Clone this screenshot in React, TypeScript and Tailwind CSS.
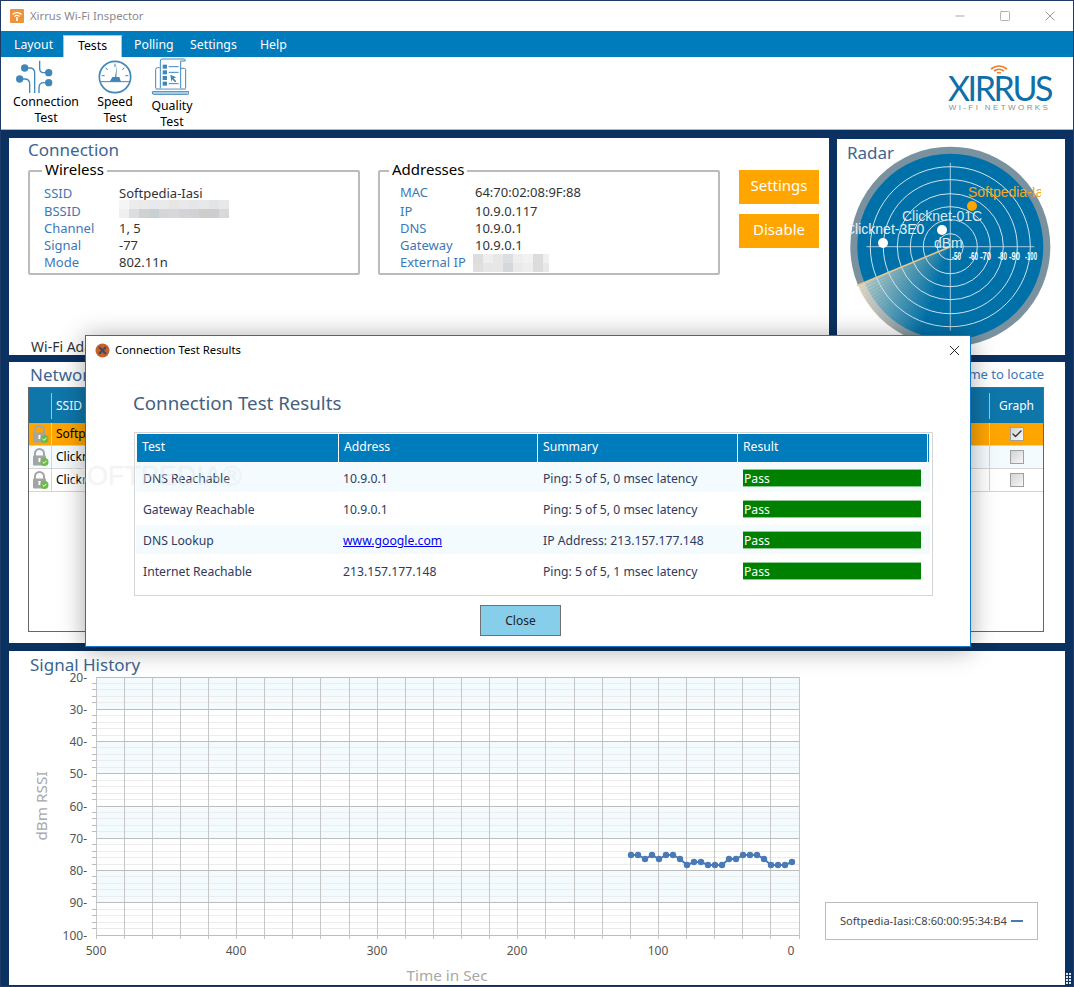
import React from "react";
import { Minus, Square, X, Check } from "lucide-react";

const LABEL = "text-[#3b78b8]";
const HEAD = "text-[17px] text-[#3d6591]";

function Blur({ rows }: { rows: string[][] }) {
  return (
    <div className="flex flex-col overflow-hidden">
      {rows.map((r, i) => (
        <div key={i} className="flex h-[9px]">
          {r.map((c, j) => (
            <div key={j} className="w-[10px] h-full shrink-0" style={{ background: c }} />
          ))}
        </div>
      ))}
    </div>
  );
}

function AppIcon() {
  return (
    <svg width="14" height="14" viewBox="0 0 14 14">
      <rect width="14" height="14" rx="1" fill="#f0923a" />
      <path d="M2.5 5.5a6.5 6.5 0 0 1 9 0M4.5 7.5a3.6 3.6 0 0 1 5 0" fill="none" stroke="#fff" strokeWidth="1.2" />
      <path d="M7 8v4" stroke="#fff" strokeWidth="1.6" />
    </svg>
  );
}

function ConnectionIcon() {
  return (
    <svg width="42" height="36" viewBox="40 180 126 108" fill="none" stroke="#3f87b9" strokeWidth="4">
      <circle cx="75" cy="207" r="11" fill="#3f87b9" stroke="none" />
      <circle cx="60" cy="240" r="11" fill="#3f87b9" stroke="none" />
      <circle cx="147" cy="221" r="11" fill="#3f87b9" stroke="none" />
      <circle cx="147" cy="251" r="11" fill="#3f87b9" stroke="none" />
      <path d="M80 207h10q15 0 15 15v60" />
      <path d="M65 240h10q15 0 15 15v27" />
      <path d="M120 185v24q0 12 15 12h8" />
      <path d="M118 282v-16q0-15 15-15h10" />
    </svg>
  );
}

function SpeedIcon() {
  return (
    <svg width="36" height="36" viewBox="290 178 108 108" fill="none" stroke="#3f87b9" strokeWidth="4">
      <circle cx="344" cy="232" r="47" strokeWidth="5" />
      <path d="M301 246h86" strokeWidth="3" />
      <path d="M344 192v10M316 204l6 7M372 204l-6 7M304 228h9M384 228h-9" strokeWidth="3" />
      <path d="M350 196l-2 36h9l5 14h-34l8-14h8z" fill="#3f87b9" stroke="none" />
    </svg>
  );
}

function QualityIcon() {
  return (
    <svg width="38" height="38" viewBox="452 178 114 114" fill="none" stroke="#3f87b9" strokeWidth="3">
      <path d="M466 272v-56q0-6 6-6h6M540 212h12q4 0 4 4v56" />
      <path d="M456 282h110v4q0 4-4 4H460q-4 0-4-4z" fill="#bcd8ea" />
      <path d="M466 274h90" />
      <path d="M480 272V190q0-6 6-6h66q3 0 3 6h-14v82" fill="#fff" />
      <rect x="487" y="201" width="13" height="12" fill="#3f87b9" stroke="none" />
      <rect x="487" y="218" width="13" height="12" fill="#3f87b9" stroke="none" />
      <rect x="487" y="235" width="13" height="12" fill="#3f87b9" stroke="none" />
      <rect x="487" y="252" width="13" height="12" fill="#3f87b9" stroke="none" />
      <path d="M505 207h30M505 224h30M505 258h30" strokeWidth="3" />
      <path d="M510 231l18 8-8 3 8 9-4 3-8-9-3 7z" fill="#3f87b9" stroke="none" />
    </svg>
  );
}

function ToolItem({ icon, top, bottom, w, mt, iconCls }: { icon: React.ReactNode; top: string; bottom: string; w: string; mt: string; iconCls: string }) {
  return (
    <div className={`flex flex-col items-center ${w}`}>
      <div className={`h-[38px] flex items-end ${iconCls}`}>{icon}</div>
      <div className={`text-[12.3px] leading-[16px] text-black text-center ${mt}`}>
        {top}
        <br />
        {bottom}
      </div>
    </div>
  );
}

function Lock() {
  return (
    <svg width="20" height="20" viewBox="0 0 20 20">
      <path d="M5 9V6.5a4.5 4.5 0 0 1 9 0V9" fill="none" stroke="#a4a4a4" strokeWidth="2" />
      <rect x="3" y="8.5" width="13" height="10" rx="1" fill="#a4a4a4" />
      <rect x="8.5" y="11" width="2" height="4" fill="#fff" />
      <circle cx="14.5" cy="15" r="4" fill="#6fb84a" />
      <path d="M12.6 15l1.4 1.4 2.4-2.6" fill="none" stroke="#fff" strokeWidth="1" />
    </svg>
  );
}

function Checkbox({ checked }: { checked?: boolean }) {
  return (
    <div className="w-[14px] h-[14px] border border-[#a0a0a0] bg-linear-to-br from-[#d4d4d4] to-[#f6f6f6] flex items-center justify-center">
      {checked && <Check size={12} strokeWidth={2.5} className="text-[#333]" />}
    </div>
  );
}

function Radar() {
  const cx = 950.3;
  const cy = 246.7;
  const slices = Array.from({ length: 24 }, (_, i) => i);
  const pt = (deg: number, r: number) => {
    const a = (deg * Math.PI) / 180;
    return `${(cx + r * Math.cos(a)).toFixed(1)} ${(cy + r * Math.sin(a)).toFixed(1)}`;
  };
  const ticks: [string, number, number][] = [
    ["-50", 952, 9],
    ["-60", 969, 9],
    ["-70", 980, 11],
    ["-80", 998, 9],
    ["-90", 1009, 11],
    ["-100", 1025, 12],
  ];
  return (
    <svg width="228" height="216" viewBox="837 139 228 216" className="block">
      <defs>
        <radialGradient id="sw" gradientUnits="userSpaceOnUse" cx={cx} cy={cy} r="101">
          <stop offset="0" stopColor="#ffe2ae" stopOpacity="0.15" />
          <stop offset="1" stopColor="#fff0d6" stopOpacity="0.95" />
        </radialGradient>
        <clipPath id="cl">
          <rect x="850" y="139" width="191" height="216" />
        </clipPath>
      </defs>
      <circle cx={cx} cy={cy} r="100" fill="#7a929f" />
      <circle cx={cx} cy={cy} r="93" fill="#0071a8" />
      {slices.map((i) => (
        <path
          key={i}
          d={`M${cx} ${cy}L${pt(157.4 - i * 2, 101)}L${pt(157.4 - (i + 1) * 2, 101)}Z`}
          fill="url(#sw)"
          opacity={0.8 * (1 - i / 24)}
        />
      ))}
      {[13, 27, 40, 53, 67, 80].map((r) => (
        <circle key={r} cx={cx} cy={cy} r={r} fill="none" stroke="#cfe2ee" strokeWidth="1" />
      ))}
      <path d={`M${cx - 84} ${cy}H${cx + 84}M${cx} ${cy - 84}V${cy + 84}`} stroke="#cfe2ee" strokeWidth="1" opacity="0.8" />
      <path d={`M${cx} ${cy}L${pt(157.4, 101)}`} stroke="#eac68c" strokeWidth="1.5" />
      <g clipPath="url(#cl)" fontFamily="'Liberation Sans', sans-serif" fontSize="14">
        <text x="968" y="197" fill="#f6a623">Softpedia-Iasi</text>
        <text x="902" y="221" fill="#d8e8f0">Clicknet-01C</text>
        <text x="845" y="234" fill="#e6f0f5">Clicknet-3E0</text>
        <text x="934" y="248" fill="#d8e8f0">dBm</text>
      </g>
      <circle cx="972" cy="206" r="5" fill="#ffa500" />
      <circle cx="942" cy="230" r="5" fill="#fff" />
      <circle cx="883" cy="243" r="5" fill="#fff" />
      {ticks.map(([t, x, w]) => (
        <text key={t} x={x} y="260" fontSize="10" fontWeight="700" fill="#fff" fontFamily="'Liberation Sans', sans-serif" textLength={w} lengthAdjust="spacingAndGlyphs">
          {t}
        </text>
      ))}
    </svg>
  );
}

function Chart() {
  const x0 = 96;
  const x1 = 799;
  const y0 = 677;
  const y1 = 935;
  const unit = (y1 - y0) / 80;
  const yAt = (v: number) => y0 + (v - 20) * unit;
  const vs = Array.from({ length: 26 }, (_, i) => x0 + i * 28.12);
  const bands = [20, 40, 60, 80];
  const minors = Array.from({ length: 41 }, (_, i) => 20 + i * 2).filter((v) => v % 10 !== 0);
  const majors = [20, 30, 40, 50, 60, 70, 80, 90, 100];
  const ptsY = [855, 855, 859, 855, 859, 855, 855, 859, 865, 862, 862, 865, 865, 865, 859, 859, 855, 855, 855, 859, 865, 865, 865, 862];
  const pts = ptsY.map((y, i) => [631 + i * 7, y]);
  const xl: [string, number][] = [
    ["500", 96],
    ["400", 236],
    ["300", 377],
    ["200", 517],
    ["100", 658],
    ["0", 791],
  ];
  return (
    <svg width="780" height="313" viewBox="30 672 780 313" className="block shrink-0" fontFamily="'Noto Sans', sans-serif">
      {bands.map((b) => (
        <rect key={b} x={x0} y={yAt(b)} width={x1 - x0} height={unit * 10} fill="#f3fbfe" />
      ))}
      <g shapeRendering="crispEdges">
        {minors.map((v) => (
          <g key={v}>
            <line x1={x0} x2={x1} y1={yAt(v)} y2={yAt(v)} stroke="#ececec" />
            <line x1={x0 - 4} x2={x0} y1={yAt(v)} y2={yAt(v)} stroke="#bbb" />
          </g>
        ))}
        {vs.map((x) => (
          <line key={x} x1={x} x2={x} y1={y0} y2={y1 + 4} stroke="#c6c6c6" />
        ))}
        {majors.map((v) => (
          <line key={v} x1={x0} x2={x1} y1={yAt(v)} y2={yAt(v)} stroke="#bdbdbd" />
        ))}
      </g>
      {majors.map((v) => (
        <text key={v} x="87" y={yAt(v) + 4.5} textAnchor="end" fontSize="12" fill="#555">{v}-</text>
      ))}
      <polyline points={pts.map((p) => p.join(",")).join(" ")} fill="none" stroke="#4a7ab5" strokeWidth="2" />
      {pts.map((p, i) => (
        <circle key={i} cx={p[0]} cy={p[1]} r="3.2" fill="#4a7ab5" />
      ))}
      {xl.map(([t, x]) => (
        <text key={t} x={x} y="955" textAnchor="middle" fontSize="12" fill="#555">{t}</text>
      ))}
      <text x="447" y="981" textAnchor="middle" fontSize="15.3" fill="#a8a8a8">Time in Sec</text>
      <text transform="translate(47 806) rotate(-90)" textAnchor="middle" fontSize="15.3" fill="#a8a8a8">dBm RSSI</text>
    </svg>
  );
}

const results = [
  ["DNS Reachable", "10.9.0.1", "Ping: 5 of 5, 0 msec latency"],
  ["Gateway Reachable", "10.9.0.1", "Ping: 5 of 5, 0 msec latency"],
  ["DNS Lookup", "www.google.com", "IP Address: 213.157.177.148"],
  ["Internet Reachable", "213.157.177.148", "Ping: 5 of 5, 1 msec latency"],
];

export default function App() {
  return (
    <div className="relative w-[1074px] h-[987px] overflow-hidden border border-[#1f3a66] bg-white flex flex-col font-['Noto_Sans','Open_Sans',sans-serif] text-[12px]">
      {/* Title bar */}
      <div className="h-[30px] shrink-0 flex items-center pl-[9px]">
        <AppIcon />
        <span className="ml-[6px] text-[11.3px] text-[#8a8a8a]">Xirrus Wi-Fi Inspector</span>
        <div className="ml-auto flex items-center text-[#808080] pr-[1px]">
          <div className="w-[45px] flex justify-center"><Minus size={14} strokeWidth={1.2} /></div>
          <div className="w-[45px] flex justify-center"><Square size={12} strokeWidth={1.2} /></div>
          <div className="w-[45px] flex justify-center"><X size={16} strokeWidth={1.2} /></div>
        </div>
      </div>
      {/* Menu */}
      <div className="h-[26px] shrink-0 bg-[#007bbb] flex items-end pl-[13px] text-[12.3px] text-white">
        <div className="h-[26px] flex items-center w-[49px] pt-[3px]">Layout</div>
        <div className="h-[22px] w-[59px] bg-white border-t border-x border-[#c0c0c0] text-black flex items-center justify-center">Tests</div>
        <div className="h-[26px] flex items-center ml-[12px] w-[56px] pt-[3px]">Polling</div>
        <div className="h-[26px] flex items-center w-[70px] pt-[3px]">Settings</div>
        <div className="h-[26px] flex items-center pt-[3px]">Help</div>
      </div>
      {/* Toolbar */}
      <div className="h-[73px] shrink-0 border-b border-[#b5b5b5] flex pl-[9px] pr-[21px]">
        <ToolItem icon={<ConnectionIcon />} top="Connection" bottom="Test" w="w-[72px]" mt="-mt-[1px]" iconCls="pr-[24px]" />
        <ToolItem icon={<SpeedIcon />} top="Speed" bottom="Test" w="w-[48px] ml-[9px]" mt="-mt-[1px]" iconCls="" />
        <ToolItem icon={<QualityIcon />} top="Quality" bottom="Test" w="w-[56px] ml-[5px]" mt="mt-[3px]" iconCls="pr-[4px]" />
        <div className="ml-auto flex flex-col items-center pt-[8px] w-[105px]">
          <svg width="18" height="9" viewBox="0 0 18 9" fill="none" stroke="#ee7d2b" strokeWidth="1.6" className="-ml-[2px]">
            <path d="M1 4q8-6 16 0M4 6q5-3.5 10 0M7 8q2-1 4 0" />
          </svg>
          <div className="font-['Lato',sans-serif] text-[34px] leading-[28px] tracking-[-2.4px] text-[#0f6fa8]">XIRRUS</div>
          <div className="font-['Liberation_Sans',sans-serif] text-[8px] leading-[11px] tracking-[2.4px] text-[#8a8f93] whitespace-nowrap">WI-FI NETWORKS</div>
        </div>
      </div>
      {/* Main */}
      <div className="flex-1 min-h-0 bg-[#0a315f] pt-[8px] px-[8px] pb-[1px] flex flex-col">
        <div className="h-[217px] shrink-0 flex gap-[8px]">
          {/* Connection */}
          <div className="w-[820px] bg-white flex flex-col">
            <div className={`h-[23px] pl-[19px] leading-[23px] ${HEAD}`}>Connection</div>
            <div className="flex pl-[19px]">
              <fieldset className="w-[332px] h-[114px] border-2 border-[#bbbbbb] rounded-[2px] pl-[14px]">
                <legend className="text-[15px] leading-[20px] text-black px-[3px] -ml-[2px] -translate-y-[2.5px]">Wireless</legend>
                <div className="grid grid-cols-[75px_1fr] grid-rows-[18px_17px_17px_17px_17px] text-[13px] leading-[17px] mt-[4px] text-[#333]">
                  <div className={LABEL}>SSID</div><div>Softpedia-Iasi</div>
                  <div className={LABEL}>BSSID</div>
                  <div className="-mt-[3px]">
                    <Blur rows={[
                      ["#f5f5f5", "#ececec", "#eaeaea", "#e6eaec", "#e9eaea", "#e6e6e4", "#e8e9ea", "#e4e6e8", "#e6e8ea", "#e3e4e6", "#e6e8ea"],
                      ["#efefef", "#dcdde0", "#d0d2d2", "#c8d0d4", "#d4d6da", "#d8d8d8", "#d2d4da", "#d2d2d6", "#cfcdcc", "#cdcdcf", "#d6d9dc"],
                    ]} />
                  </div>
                  <div className={LABEL}>Channel</div><div>1, 5</div>
                  <div className={LABEL}>Signal</div><div>-77</div>
                  <div className={LABEL}>Mode</div><div>802.11n</div>
                </div>
              </fieldset>
              <fieldset className="ml-[18px] w-[342px] h-[114px] border-2 border-[#bbbbbb] rounded-[2px] pl-[20px]">
                <legend className="text-[15px] leading-[20px] text-black px-[3px] -ml-[11px] -translate-y-[2.5px]">Addresses</legend>
                <div className="grid grid-cols-[75px_1fr] grid-rows-[19px_17px_17px_17px_17px] text-[13px] leading-[17px] mt-[3px] text-[#333]">
                  <div className={LABEL}>MAC</div><div>64:70:02:08:9F:88</div>
                  <div className={LABEL}>IP</div><div>10.9.0.117</div>
                  <div className={LABEL}>DNS</div><div>10.9.0.1</div>
                  <div className={LABEL}>Gateway</div><div>10.9.0.1</div>
                  <div className={`${LABEL} whitespace-nowrap`}>External IP</div>
                  <div className="-ml-[2px] w-[76px]">
                    <Blur rows={[
                      ["#dedcdc", "#eeeeee", "#e8e6e6", "#dcdfe2", "#eeeeee", "#f2f2f2", "#dddcdb", "#f0f0f2"],
                      ["#e0dede", "#e4e6e8", "#e8e6e6", "#d4d8dc", "#eaeaea", "#eeeeee", "#dcdcdc", "#e8e8ea"],
                    ]} />
                  </div>
                </div>
              </fieldset>
              <div className="ml-[19px] mt-[9px] flex flex-col gap-[10px]">
                <div className="w-[80px] h-[34px] pb-[3px] bg-[#ffa500] text-white text-[15px] flex items-center justify-center">Settings</div>
                <div className="w-[80px] h-[34px] pb-[3px] bg-[#ffa500] text-white text-[15px] flex items-center justify-center">Disable</div>
              </div>
            </div>
            <div className="mt-auto pl-[22px] text-[14px] leading-[16px] text-[#333]">Wi-Fi Adapter</div>
          </div>
          {/* Radar */}
          <div className="flex-1 mt-[1px] bg-white relative">
            <Radar />
            <div className={`absolute left-[10px] top-[1px] leading-[25px] ${HEAD}`}>Radar</div>
          </div>
        </div>
        {/* Network */}
        <div className="h-[281px] shrink-0 mt-[7px] bg-white flex flex-col pl-[19px] pr-[21px]">
          <div className="h-[25px] shrink-0 flex items-center justify-between">
            <div className={`${HEAD} pl-[2px]`}>Networks</div>
            <div className="text-[13px] text-[#3b78b8]">Click name to locate</div>
          </div>
          <div className="h-[245px] border border-[#666] flex flex-col">
            <div className="h-[35px] shrink-0 bg-[#0f76aa] grid grid-cols-[22px_1fr_54px] text-white text-[12px] items-center">
              <div />
              <div className="h-[26px] border-l border-[#9fc4d9] pl-[4px] flex items-center">SSID</div>
              <div className="h-[26px] border-l border-[#9fc4d9] flex items-center justify-center">Graph</div>
            </div>
            {[
              { name: "Softpedia-Iasi", cls: "bg-[#ffa500]", checked: true },
              { name: "Clicknet-01C", cls: "bg-[#f4fbff]", checked: false },
              { name: "Clicknet-3E0", cls: "bg-white", checked: false },
            ].map((r) => (
              <div key={r.name} className={`h-[23px] shrink-0 border-b border-[#d4d4d4] grid grid-cols-[22px_1fr_54px] items-center ${r.cls}`}>
                <div className="h-full flex items-center justify-center"><Lock /></div>
                <div className="h-full border-l border-[#d4d4d4] pl-[4px] flex items-center text-black">{r.name}</div>
                <div className="h-full border-l border-[#d4d4d4] flex items-center justify-center"><Checkbox checked={r.checked} /></div>
              </div>
            ))}
          </div>
        </div>
        {/* Signal history */}
        <div className="flex-1 min-h-0 mt-[8px] bg-white">
          <div className={`h-[21px] pl-[21px] leading-[27px] ${HEAD}`}>Signal History</div>
          <div className="flex pl-[21px]">
            <Chart />
            <div className="ml-[15px] mt-[230px] w-[213px] h-[38px] border border-[#bbbbbb] flex items-center pl-[14px] text-[11.1px] text-[#444] whitespace-nowrap">
              <span>Softpedia-Iasi:C8:60:00:95:34:B4</span>
              <span className="ml-[4px] w-[12px] h-[2px] bg-[#4a7ab5]" />
            </div>
          </div>
        </div>
      </div>

      {/* Resize grip */}
      <svg width="7" height="12" viewBox="0 0 7 12" className="absolute right-0 bottom-[1px]" fill="#dfe7ef">
        {[0, 3, 6, 9].map((y) => (
          <g key={y}>
            <rect x="0" y={y} width="2" height="2" />
            <rect x="3" y={y} width="2" height="2" />
          </g>
        ))}
      </svg>

      {/* Modal */}
      <div className="absolute left-[84px] top-[334px] w-[886px] h-[312px] bg-white border border-[#0f78c8] shadow-[0_2px_24px_rgba(0,0,0,0.35)] flex flex-col">
        <div className="h-[28px] shrink-0 flex items-center pl-[9px] pr-[7px]">
          <svg width="15" height="15" viewBox="0 0 15 15">
            <circle cx="7.5" cy="7.5" r="7" fill="#c8622c" />
            <path d="M4 4l7 7M11 4l-7 7" stroke="#35506b" strokeWidth="2.4" />
          </svg>
          <span className="ml-[5px] text-[11.3px] text-black">Connection Test Results</span>
          <X size={17} strokeWidth={1.2} className="ml-auto text-black" />
        </div>
        <div className="pl-[47px] mt-[25px] h-[28px] leading-[28px] text-[18.7px] text-[#44607f]">Connection Test Results</div>
        <div className="ml-[48px] mt-[15px] w-[799px] h-[164px] border border-[#d5d5d5] pt-[1px] text-[#2f3a5c] text-[12.2px]">
          <div className="ml-[2px] w-[792px] h-[28px] bg-[#007bbb] grid grid-cols-[201px_199px_200px_190px_2px] text-white mb-[1px]">
            {["Test", "Address", "Summary", "Result"].map((h, i) => (
              <div key={h} className={`flex items-center pb-[2px] ${i ? "border-l border-white pl-[5px]" : "pl-[5px]"}`}>{h}</div>
            ))}
            <div className="border-l border-white" />
          </div>
          {results.map((r, i) => (
            <div key={r[0]} className={`h-[29px] mb-[2px] ml-[1px] w-[794px] pl-[1px] grid grid-cols-[201px_200px_200px_1fr] items-center ${i % 2 === 0 ? "bg-[#f4fbff]" : ""}`}>
              <div className="pl-[6px] pt-[3px]">{r[0]}</div>
              <div className="pl-[5px] pt-[3px]">
                {i === 2 ? <span className="text-[#0000ee] underline">{r[1]}</span> : r[1]}
              </div>
              <div className="pl-[5px] pt-[3px]">{r[2]}</div>
              <div className="pl-[5px]">
                <div className="w-[178px] h-[18px] bg-[#008000] border-y border-[#8fc98f] text-white pl-[1px] leading-[17px]">Pass</div>
              </div>
            </div>
          ))}
        </div>
        <div className="pl-[394px] mt-[9px]">
          <div className="w-[81px] h-[31px] bg-[#87ceeb] border border-[#707070] flex items-center justify-center text-[#222]">Close</div>
        </div>
      </div>

      {/* Watermark */}
      <div className="absolute left-[68px] top-[457px] text-[27px] leading-[36px] font-['Liberation_Sans',sans-serif] text-white/40 pointer-events-none [text-shadow:0_0_1px_rgba(0,0,0,0.08)]">SOFTPEDIA®</div>
    </div>
  );
}
